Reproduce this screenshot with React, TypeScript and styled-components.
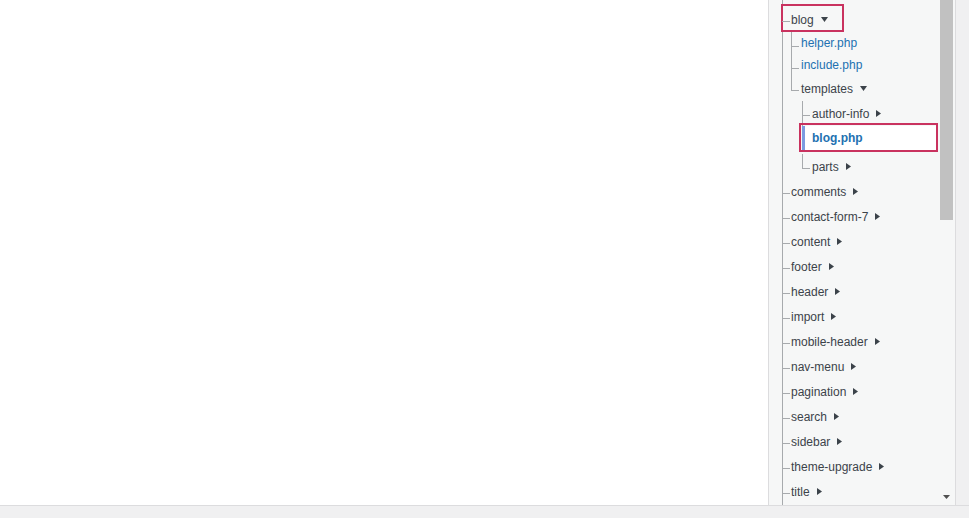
import styled, { createGlobalStyle, css } from 'styled-components';

type Entry = {
  name: string;
  kind: 'file' | 'folder';
  open?: boolean;
  current?: boolean;
  marked?: boolean;
  children?: Entry[];
};

const tree: Entry[] = [
  {
    name: 'blog',
    kind: 'folder',
    open: true,
    marked: true,
    children: [
      { name: 'helper.php', kind: 'file' },
      { name: 'include.php', kind: 'file' },
      {
        name: 'templates',
        kind: 'folder',
        open: true,
        children: [
          { name: 'author-info', kind: 'folder' },
          { name: 'blog.php', kind: 'file', current: true, marked: true },
          { name: 'parts', kind: 'folder' },
        ],
      },
    ],
  },
  { name: 'comments', kind: 'folder' },
  { name: 'contact-form-7', kind: 'folder' },
  { name: 'content', kind: 'folder' },
  { name: 'footer', kind: 'folder' },
  { name: 'header', kind: 'folder' },
  { name: 'import', kind: 'folder' },
  { name: 'mobile-header', kind: 'folder' },
  { name: 'nav-menu', kind: 'folder' },
  { name: 'pagination', kind: 'folder' },
  { name: 'search', kind: 'folder' },
  { name: 'sidebar', kind: 'folder' },
  { name: 'theme-upgrade', kind: 'folder' },
  { name: 'title', kind: 'folder' },
];

const LINE = '#a7aaad';

const GlobalStyle = createGlobalStyle`
  html, body {
    margin: 0;
    padding: 0;
    background: #f0f0f1;
  }
  body {
    font-family: "Liberation Sans", Arial, sans-serif;
    font-size: 12px;
    color: #3c434a;
  }
`;

const Screen = styled.div`
  display: flex;
  height: 505px;
  border-bottom: 1px solid #dcdcde;
`;

const Editor = styled.div`
  width: 768px;
  background: #fff;
  border-right: 1px solid #dcdcde;
`;

const Sidebar = styled.div`
  display: flex;
  width: 186px;
  background: #f6f7f7;
  border-right: 1px solid #dcdcde;
  overflow: hidden;
`;

const TreeArea = styled.div`
  flex: 1;
  padding: 0 2px 0 13px;
  overflow: hidden;
`;

const Branch = styled.ul<{ $root?: boolean; $indent: number }>`
  list-style: none;
  margin: 0 0 0 ${(p) => p.$indent}px;
  padding: 0;
  ${(p) =>
    p.$root &&
    css`
      padding: 7px 0 4px;
      border-left: 1px solid ${LINE};
      min-height: 100%;
      box-sizing: border-box;
    `}
`;

const Node = styled.li<{ $root?: boolean }>`
  position: relative;

  &::before {
    content: '';
    display: ${(p) => (p.$root ? 'none' : 'block')};
    position: absolute;
    left: 0;
    top: 0;
    height: 14px;
    border-left: 1px solid ${LINE};
  }

  &:not(:last-child)::before {
    height: auto;
    bottom: 0;
  }

  &::after {
    content: '';
    position: absolute;
    left: ${(p) => (p.$root ? -1 : 0)}px;
    top: 14px;
    width: 8px;
    border-top: 1px solid ${LINE};
  }
`;

const FolderLabel = styled.div<{ $pad: number }>`
  position: relative;
  display: flex;
  align-items: center;
  height: 25px;
  padding-left: ${(p) => p.$pad}px;
  color: #3c434a;
  cursor: pointer;
`;

const FileLink = styled.a<{ $pad: number; $current?: boolean }>`
  display: block;
  height: 22px;
  line-height: 22px;
  padding-left: ${(p) => p.$pad}px;
  color: #2271b1;
  text-decoration: none;

  ${(p) =>
    p.$current &&
    css`
      position: relative;
      z-index: 1;
      height: 25px;
      line-height: 25px;
      margin-bottom: 3px;
      background: #fff;
      box-shadow: inset 3px 0 0 #7b9be0;
      font-weight: 700;
    `}
`;

const Caret = styled.svg`
  margin-left: 7px;
  fill: #3c434a;
  flex: none;
`;

const Mark = styled.span<{ $top: number; $left: number; $right?: number; $bottom?: number; $w?: number; $h?: number }>`
  position: absolute;
  top: ${(p) => p.$top}px;
  left: ${(p) => p.$left}px;
  ${(p) => (p.$right !== undefined ? `right: ${p.$right}px;` : `width: ${p.$w}px;`)}
  ${(p) => (p.$bottom !== undefined ? `bottom: ${p.$bottom}px;` : `height: ${p.$h}px;`)}
  border: 2px solid #c9325f;
  box-sizing: border-box;
  pointer-events: none;
`;

const Scrollbar = styled.div`
  display: flex;
  flex-direction: column;
  width: 17px;
  flex: none;
`;

const Thumb = styled.div`
  height: 220px;
  margin: 0 2px;
  background: #c1c1c1;
`;

const Track = styled.div`
  flex: 1;
`;

const ArrowButton = styled.div`
  display: flex;
  align-items: center;
  justify-content: center;
  height: 17px;
`;

const indents = [0, 8, 11];

function Arrow({ open }: { open?: boolean }) {
  return open ? (
    <Caret width="7" height="5" viewBox="0 0 7 5">
      <polygon points="0,0 7,0 3.5,5" />
    </Caret>
  ) : (
    <Caret width="5" height="7" viewBox="0 0 5 7">
      <polygon points="0,0 5,3.5 0,7" />
    </Caret>
  );
}

function TreeNode({ entry, depth }: { entry: Entry; depth: number }) {
  const pad = depth === 0 ? 8 : 10;
  return (
    <Node $root={depth === 0}>
      {entry.kind === 'file' ? (
        <FileLink href="#" $pad={pad} $current={entry.current}>
          {entry.name}
          {entry.marked && <Mark $top={-3} $left={-3} $right={-2} $bottom={-1} />}
        </FileLink>
      ) : (
        <FolderLabel $pad={pad}>
          {entry.name}
          <Arrow open={entry.open} />
          {entry.marked && <Mark $top={-3} $left={-2} $w={63} $h={28} />}
        </FolderLabel>
      )}
      {entry.open && entry.children && (
        <Branch $indent={indents[depth + 1]}>
          {entry.children.map((child) => (
            <TreeNode key={child.name} entry={child} depth={depth + 1} />
          ))}
        </Branch>
      )}
    </Node>
  );
}

export default function App() {
  return (
    <>
      <GlobalStyle />
      <Screen>
        <Editor />
        <Sidebar>
          <TreeArea>
            <Branch $root $indent={0}>
              {tree.map((entry) => (
                <TreeNode key={entry.name} entry={entry} depth={0} />
              ))}
            </Branch>
          </TreeArea>
          <Scrollbar>
            <Thumb />
            <Track />
            <ArrowButton>
              <svg width="7" height="4" viewBox="0 0 7 4">
                <polygon points="0,0 7,0 3.5,4" fill="#505050" />
              </svg>
            </ArrowButton>
          </Scrollbar>
        </Sidebar>
      </Screen>
    </>
  );
}
